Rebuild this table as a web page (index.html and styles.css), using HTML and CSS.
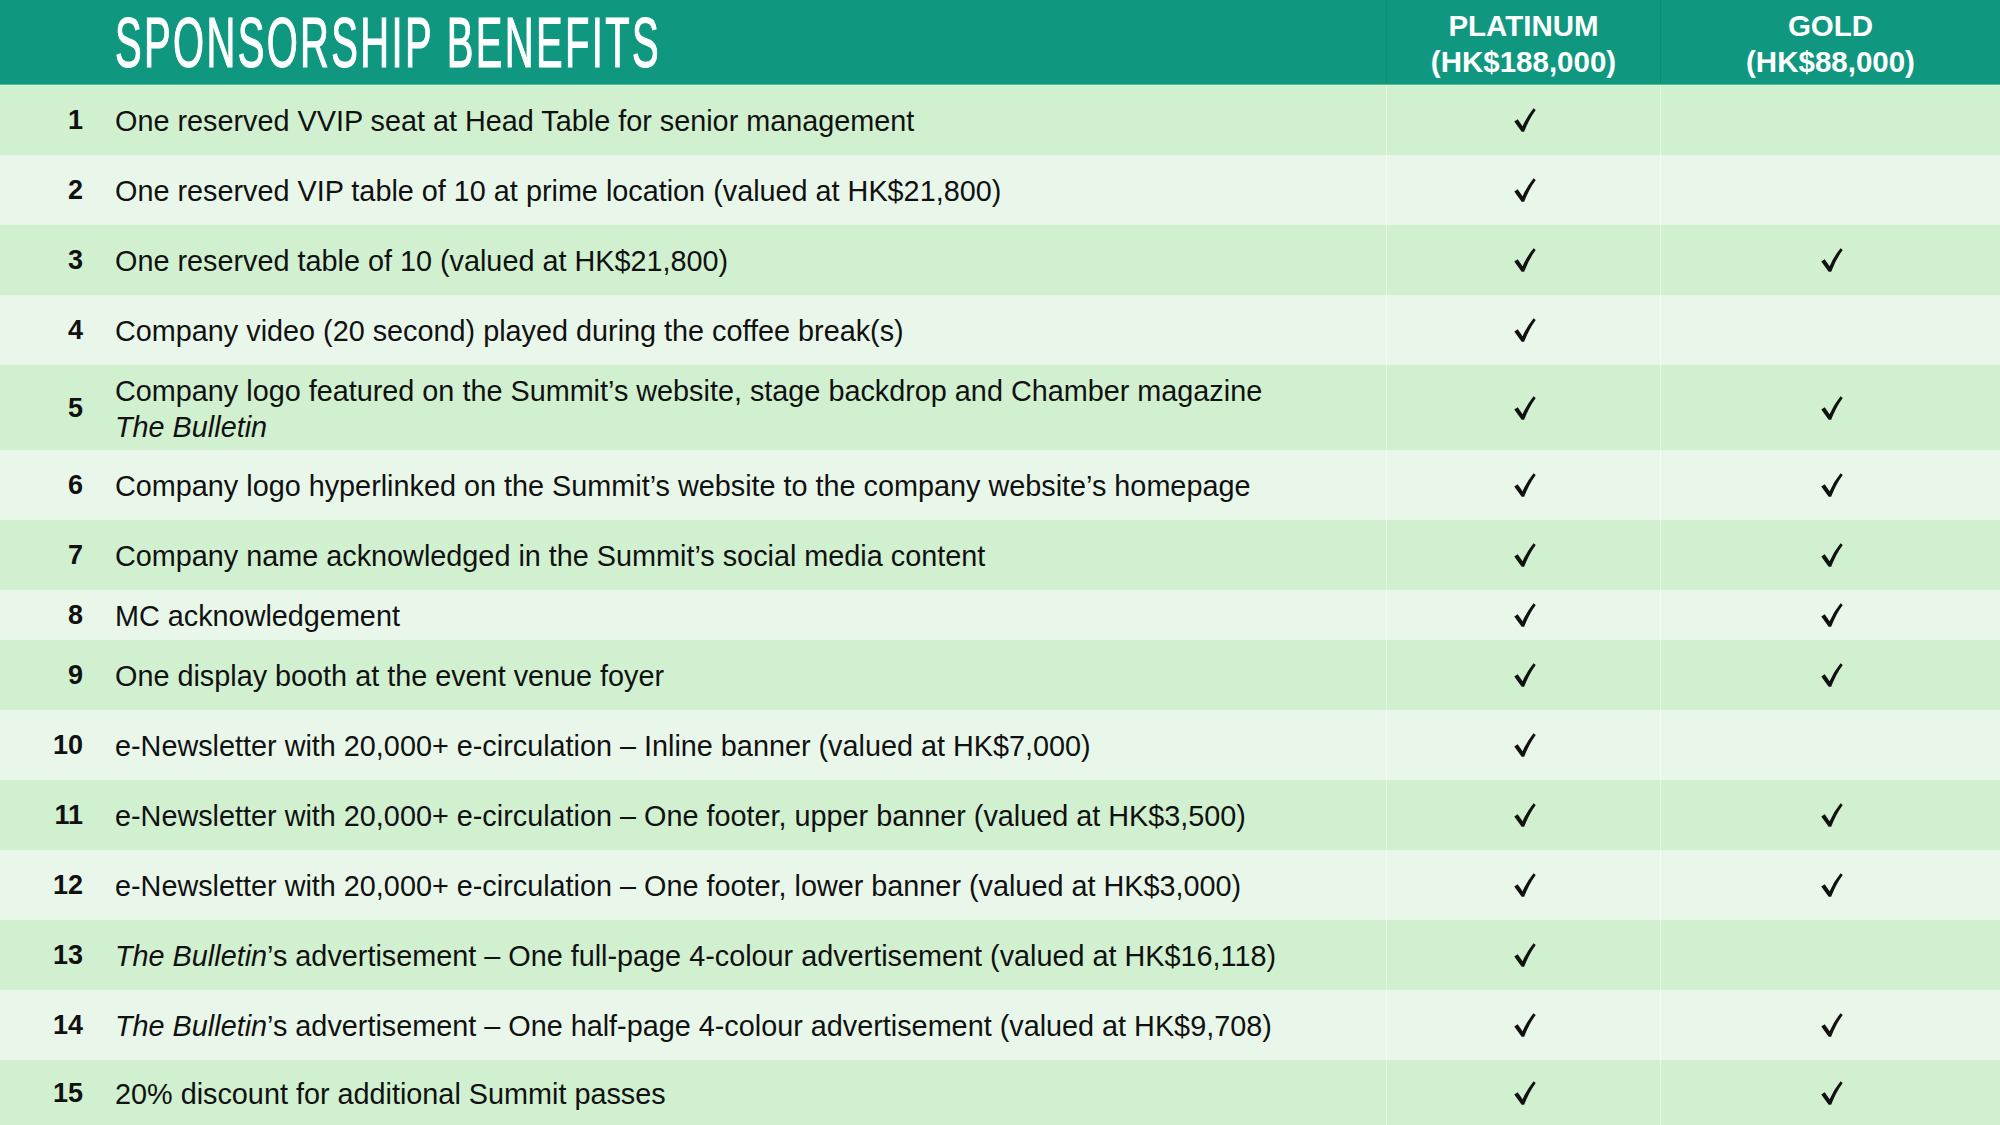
FILE: index.html
```html
<!DOCTYPE html>
<html lang="en">
<head>
<meta charset="utf-8">
<title>Sponsorship Benefits</title>
<link rel="stylesheet" href="styles.css">
</head>
<body>
<svg width="0" height="0" class="defs" aria-hidden="true">
  <defs>
    <path id="tick" d="M0.2 12.9 L3.5 10.7 L8.2 17.4 Q12.2 8.2 18.7 0.2 L20.8 1.8 Q14.4 10.4 9.7 22.7 L7.3 22.7 Z"/>
  </defs>
</svg>
<main class="table">
  <header class="row head">
    <div class="cell num"></div>
    <div class="cell title"><span class="title-text">SPONSORSHIP BENEFITS</span></div>
    <div class="cell tier"><span>PLATINUM<br>(HK$188,000)</span></div>
    <div class="cell tier"><span>GOLD<br>(HK$88,000)</span></div>
  </header>

  <div class="row dark">
    <div class="cell num">1</div>
    <div class="cell text"><span>One reserved VVIP seat at Head Table for senior management</span></div>
    <div class="cell mark"><svg class="check" viewBox="0 0 21 23"><use href="#tick"/></svg></div>
    <div class="cell mark"></div>
  </div>
  <div class="row light">
    <div class="cell num">2</div>
    <div class="cell text"><span>One reserved VIP table of 10 at prime location (valued at HK$21,800)</span></div>
    <div class="cell mark"><svg class="check" viewBox="0 0 21 23"><use href="#tick"/></svg></div>
    <div class="cell mark"></div>
  </div>
  <div class="row dark">
    <div class="cell num">3</div>
    <div class="cell text"><span>One reserved table of 10 (valued at HK$21,800)</span></div>
    <div class="cell mark"><svg class="check" viewBox="0 0 21 23"><use href="#tick"/></svg></div>
    <div class="cell mark"><svg class="check" viewBox="0 0 21 23"><use href="#tick"/></svg></div>
  </div>
  <div class="row light">
    <div class="cell num">4</div>
    <div class="cell text"><span>Company video (20 second) played during the coffee break(s)</span></div>
    <div class="cell mark"><svg class="check" viewBox="0 0 21 23"><use href="#tick"/></svg></div>
    <div class="cell mark"></div>
  </div>
  <div class="row dark tall">
    <div class="cell num">5</div>
    <div class="cell text"><span>Company logo featured on the Summit’s website, stage backdrop and Chamber magazine<br><i>The Bulletin</i></span></div>
    <div class="cell mark"><svg class="check" viewBox="0 0 21 23"><use href="#tick"/></svg></div>
    <div class="cell mark"><svg class="check" viewBox="0 0 21 23"><use href="#tick"/></svg></div>
  </div>
  <div class="row light">
    <div class="cell num">6</div>
    <div class="cell text"><span>Company logo hyperlinked on the Summit’s website to the company website’s homepage</span></div>
    <div class="cell mark"><svg class="check" viewBox="0 0 21 23"><use href="#tick"/></svg></div>
    <div class="cell mark"><svg class="check" viewBox="0 0 21 23"><use href="#tick"/></svg></div>
  </div>
  <div class="row dark">
    <div class="cell num">7</div>
    <div class="cell text"><span>Company name acknowledged in the Summit’s social media content</span></div>
    <div class="cell mark"><svg class="check" viewBox="0 0 21 23"><use href="#tick"/></svg></div>
    <div class="cell mark"><svg class="check" viewBox="0 0 21 23"><use href="#tick"/></svg></div>
  </div>
  <div class="row light short">
    <div class="cell num">8</div>
    <div class="cell text"><span>MC acknowledgement</span></div>
    <div class="cell mark"><svg class="check" viewBox="0 0 21 23"><use href="#tick"/></svg></div>
    <div class="cell mark"><svg class="check" viewBox="0 0 21 23"><use href="#tick"/></svg></div>
  </div>
  <div class="row dark">
    <div class="cell num">9</div>
    <div class="cell text"><span>One display booth at the event venue foyer</span></div>
    <div class="cell mark"><svg class="check" viewBox="0 0 21 23"><use href="#tick"/></svg></div>
    <div class="cell mark"><svg class="check" viewBox="0 0 21 23"><use href="#tick"/></svg></div>
  </div>
  <div class="row light">
    <div class="cell num">10</div>
    <div class="cell text"><span>e-Newsletter with 20,000+ e-circulation – Inline banner (valued at HK$7,000)</span></div>
    <div class="cell mark"><svg class="check" viewBox="0 0 21 23"><use href="#tick"/></svg></div>
    <div class="cell mark"></div>
  </div>
  <div class="row dark">
    <div class="cell num">11</div>
    <div class="cell text"><span>e-Newsletter with 20,000+ e-circulation – One footer, upper banner (valued at HK$3,500)</span></div>
    <div class="cell mark"><svg class="check" viewBox="0 0 21 23"><use href="#tick"/></svg></div>
    <div class="cell mark"><svg class="check" viewBox="0 0 21 23"><use href="#tick"/></svg></div>
  </div>
  <div class="row light">
    <div class="cell num">12</div>
    <div class="cell text"><span>e-Newsletter with 20,000+ e-circulation – One footer, lower banner (valued at HK$3,000)</span></div>
    <div class="cell mark"><svg class="check" viewBox="0 0 21 23"><use href="#tick"/></svg></div>
    <div class="cell mark"><svg class="check" viewBox="0 0 21 23"><use href="#tick"/></svg></div>
  </div>
  <div class="row dark">
    <div class="cell num">13</div>
    <div class="cell text"><span><i>The Bulletin</i>’s advertisement – One full-page 4-colour advertisement (valued at HK$16,118)</span></div>
    <div class="cell mark"><svg class="check" viewBox="0 0 21 23"><use href="#tick"/></svg></div>
    <div class="cell mark"></div>
  </div>
  <div class="row light">
    <div class="cell num">14</div>
    <div class="cell text"><span><i>The Bulletin</i>’s advertisement – One half-page 4-colour advertisement (valued at HK$9,708)</span></div>
    <div class="cell mark"><svg class="check" viewBox="0 0 21 23"><use href="#tick"/></svg></div>
    <div class="cell mark"><svg class="check" viewBox="0 0 21 23"><use href="#tick"/></svg></div>
  </div>
  <div class="row dark last">
    <div class="cell num">15</div>
    <div class="cell text"><span>20% discount for additional Summit passes</span></div>
    <div class="cell mark"><svg class="check" viewBox="0 0 21 23"><use href="#tick"/></svg></div>
    <div class="cell mark"><svg class="check" viewBox="0 0 21 23"><use href="#tick"/></svg></div>
  </div>
</main>
</body>
</html>
```

FILE: styles.css
```css
* {
  box-sizing: border-box;
}

html, body {
  margin: 0;
  padding: 0;
}

body {
  width: 2000px;
  height: 1125px;
  overflow: hidden;
  background: #d0f0d0;
  font-family: "Liberation Sans", Arial, sans-serif;
  color: #111;
}

.defs {
  position: absolute;
  width: 0;
  height: 0;
}

.table {
  display: flex;
  flex-direction: column;
  width: 2000px;
  height: 1125px;
}

.row {
  display: grid;
  grid-template-columns: 115px 1271px 274px 340px;
  height: 70px;
  flex: 0 0 auto;
}

.row.tall {
  height: 85px;
}

.row.short {
  height: 50px;
}

.row.last {
  flex: 1 1 auto;
}

.row.dark {
  background: #d0f0d0;
}

.row.light {
  background: #e9f7ea;
}

.cell {
  display: flex;
  align-items: center;
}

.row.dark .cell.mark,
.row.light .cell.mark {
  border-left: 1px solid rgba(255, 255, 255, 0.45);
}

/* Header */
.row.head {
  height: 85px;
  background: #0f987f;
  color: #fff;
  border-bottom: 1px solid #4fbf99;
}

.head .title {
  overflow: visible;
  white-space: nowrap;
}

.title-text {
  display: inline-block;
  font-size: 70px;
  line-height: 70px;
  font-weight: 400;
  letter-spacing: 4.2px;
  transform: scaleX(0.57);
  transform-origin: left center;
  -webkit-text-stroke: 1.2px #fff;
  margin-top: 1px;
}

.head .tier {
  justify-content: center;
  text-align: center;
  font-size: 29.5px;
  line-height: 36px;
  font-weight: 700;
  padding-top: 3px;
  border-left: 1px solid rgba(0, 0, 0, 0.07);
}

/* Body cells */
.num {
  justify-content: flex-end;
  padding-right: 32px;
  padding-top: 1px;
  font-size: 27px;
  font-weight: 700;
}

.text {
  font-size: 28.8px;
  line-height: 36px;
  padding-top: 2px;
  white-space: nowrap;
}

.mark {
  justify-content: center;
}

.check {
  width: 22px;
  height: 24px;
  fill: #111;
  margin-left: 2px;
}
```
